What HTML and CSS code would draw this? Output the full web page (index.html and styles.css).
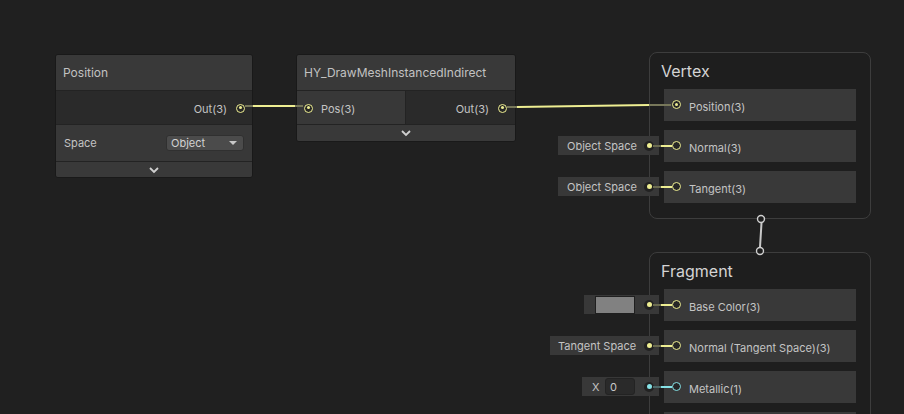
FILE: index.html
```html
<!DOCTYPE html>
<html>
<head>
<meta charset="utf-8">
<link rel="stylesheet" href="styles.css">
</head>
<body>
<div class="canvas">

  <div class="node node-position">
    <div class="node-title">Position</div>
    <div class="node-ports">
      <div class="port-out"><span class="label">Out(3)</span><span class="port connected"></span></div>
    </div>
    <div class="node-controls">
      <span class="label">Space</span>
      <div class="dropdown"><span>Object</span><span class="caret"></span></div>
    </div>
    <div class="node-collapse"><svg width="12" height="8" viewBox="0 0 12 8"><path d="M2 2 L6 6 L10 2" fill="none" stroke="#d0d0d0" stroke-width="1.8"/></svg></div>
  </div>

  <div class="node node-hy">
    <div class="node-title">HY_DrawMeshInstancedIndirect</div>
    <div class="node-ports split">
      <div class="port-in"><span class="port connected"></span><span class="label">Pos(3)</span></div>
      <div class="port-out"><span class="label">Out(3)</span><span class="port connected"></span></div>
    </div>
    <div class="node-collapse"><svg width="12" height="8" viewBox="0 0 12 8"><path d="M2 2 L6 6 L10 2" fill="none" stroke="#d0d0d0" stroke-width="1.8"/></svg></div>
  </div>

  <div class="context context-vertex">
    <div class="context-title">Vertex</div>
    <div class="block-list">
      <div class="block-row"><span class="port connected"></span><span class="label">Position(3)</span></div>
      <div class="block-row"><span class="port"></span><span class="label">Normal(3)</span></div>
      <div class="block-row"><span class="port"></span><span class="label">Tangent(3)</span></div>
    </div>
  </div>

  <div class="context context-fragment">
    <div class="context-title">Fragment</div>
    <div class="block-list">
      <div class="block-row"><span class="port"></span><span class="label">Base Color(3)</span></div>
      <div class="block-row"><span class="port"></span><span class="label">Normal (Tangent Space)(3)</span></div>
      <div class="block-row"><span class="port cyan"></span><span class="label">Metallic(1)</span></div>
      <div class="block-row"></div>
    </div>
  </div>

  <div class="inline-prop prop-normal"><span class="label">Object Space</span><span class="mini-port"></span></div>
  <div class="inline-prop prop-tangent"><span class="label">Object Space</span><span class="mini-port"></span></div>
  <div class="inline-prop prop-color"><span class="swatch"></span><span class="mini-port"></span></div>
  <div class="inline-prop prop-tspace"><span class="label">Tangent Space</span><span class="mini-port"></span></div>
  <div class="inline-prop prop-metal"><span class="label x">X</span><span class="num-field">0</span><span class="mini-port cyan"></span></div>

  <svg class="edges" width="904" height="414" viewBox="0 0 904 414">
    <g stroke-width="2" fill="none">
      <line x1="245" y1="106" x2="253" y2="106" stroke="#77775a"/>
      <line x1="253" y1="106" x2="295" y2="106" stroke="#eeee92"/>
      <line x1="295" y1="106" x2="303" y2="106" stroke="#77775a"/>

      <line x1="507" y1="107" x2="517" y2="107" stroke="#77775a"/>
      <line x1="517" y1="107" x2="649" y2="105" stroke="#eeee92"/>
      <line x1="649" y1="105" x2="671" y2="105" stroke="#77775a"/>

      <line x1="653" y1="146" x2="661" y2="146" stroke="#6b6b50"/>
      <line x1="661" y1="146" x2="672" y2="146" stroke="#eeee92"/>
      <line x1="653" y1="187" x2="661" y2="187" stroke="#6b6b50"/>
      <line x1="661" y1="187" x2="672" y2="187" stroke="#eeee92"/>
      <line x1="653" y1="305" x2="661" y2="305" stroke="#6b6b50"/>
      <line x1="661" y1="305" x2="672" y2="305" stroke="#eeee92"/>
      <line x1="653" y1="346" x2="661" y2="346" stroke="#6b6b50"/>
      <line x1="661" y1="346" x2="672" y2="346" stroke="#eeee92"/>
      <line x1="653" y1="387" x2="661" y2="387" stroke="#4e6b6b"/>
      <line x1="661" y1="387" x2="672" y2="387" stroke="#86e2e6"/>

      <line x1="761.5" y1="223" x2="760" y2="247" stroke="#c8c8c8"/>
    </g>
    <circle cx="761" cy="219" r="3.5" fill="#1e1e1e" stroke="#cfcfcf" stroke-width="1.4"/>
    <circle cx="760" cy="251" r="3.5" fill="#1e1e1e" stroke="#cfcfcf" stroke-width="1.4"/>
  </svg>
</div>
</body>
</html>
```

FILE: styles.css
```css
* { box-sizing: border-box; }
html, body { margin: 0; padding: 0; }
body {
  background: #202020;
  font-family: Inter, "Noto Sans", sans-serif;
  color: #c4c4c4;
}
.canvas {
  position: relative;
  width: 904px;
  height: 414px;
  overflow: hidden;
  background: #202020;
}
.label { font-size: 11px; color: #c4c4c4; white-space: nowrap; }

/* ---- graph nodes ---- */
.node {
  position: absolute;
  display: flex;
  flex-direction: column;
  background: #2a2a2a;
  border: 1px solid #191919;
  border-radius: 3px;
  overflow: hidden;
}
.node-position { left: 55px; top: 54px; width: 198px; height: 124px; }
.node-hy { left: 296px; top: 54px; width: 220px; height: 88px; }

.node-title {
  height: 35px;
  flex: none;
  display: flex;
  align-items: center;
  padding-left: 7px;
  background: #393939;
  font-size: 12px;
  color: #c2c2c2;
  white-space: nowrap;
}
.node-ports {
  height: 34px;
  flex: none;
  display: flex;
  background: #2a2a2a;
  border-top: 1px solid #232323;
}
.node-ports .port-out {
  flex: 1;
  display: flex;
  justify-content: flex-end;
  align-items: center;
  gap: 9px;
  padding-right: 7px;
  padding-top: 1px;
}
.node-ports .label { padding-top: 2px; }
.node-ports.split .port-in {
  width: 109px;
  flex: none;
  display: flex;
  align-items: center;
  gap: 8px;
  padding-left: 7px;
  padding-top: 1px;
  background: #383838;
  border-right: 1px solid #232323;
}
.node-ports.split .port-out { padding-right: 8px; }

.node-controls {
  height: 37px;
  flex: none;
  display: flex;
  align-items: center;
  justify-content: space-between;
  padding: 0 8px 1px 8px;
  background: #383838;
  border-top: 1px solid #232323;
}
.dropdown {
  width: 78px;
  height: 16px;
  display: flex;
  align-items: center;
  justify-content: space-between;
  padding: 0 6px 0 4px;
  background: #4b4b4b;
  border: 1px solid #303030;
  border-radius: 3px;
  font-size: 11px;
  color: #d2d2d2;
}
.caret {
  width: 0; height: 0;
  border-left: 4px solid transparent;
  border-right: 4px solid transparent;
  border-top: 4px solid #c8c8c8;
}
.node-collapse {
  flex: 1;
  display: flex;
  align-items: center;
  justify-content: center;
  background: #393939;
  border-top: 1px solid #232323;
}

/* ---- ports ---- */
.port {
  width: 9px;
  height: 9px;
  flex: none;
  border-radius: 50%;
  border: 1.5px solid #eeee92;
  background: #262626;
  position: relative;
}
.port.connected::after {
  content: "";
  position: absolute;
  left: 1.5px; top: 1.5px;
  width: 3px; height: 3px;
  border-radius: 50%;
  background: #eeee92;
}
.port.cyan { border-color: #86e2e6; }

/* ---- master stack contexts ---- */
.context {
  position: absolute;
  left: 649px;
  width: 222px;
  background: #1e1e1e;
  border: 1px solid #3d3d3d;
  border-radius: 8px;
}
.context-vertex { top: 52px; height: 167px; }
.context-fragment { top: 252px; height: 220px; }
.context-title {
  height: 36px;
  display: flex;
  align-items: center;
  padding-left: 11px;
  font-size: 16px;
  color: #d4d4d4;
}
.block-list {
  display: flex;
  flex-direction: column;
  gap: 9px;
  padding-left: 14px;
}
.block-row {
  width: 192px;
  height: 32px;
  display: flex;
  align-items: center;
  gap: 8px;
  padding-left: 8px;
  padding-top: 1px;
  background: #393939;
}
.block-row .port { top: -1px; }
.block-row .label { padding-top: 3px; }

/* ---- inline property fields beside block ports ---- */
.inline-prop {
  position: absolute;
  height: 19px;
  display: flex;
  align-items: center;
  background: #383838;
  padding-right: 5px;
}
.inline-prop .label { flex: 1; padding-left: 9px; }
.prop-normal { left: 558px; top: 136px; width: 101px; }
.prop-tangent { left: 558px; top: 177px; width: 101px; }
.prop-color { left: 584px; top: 295px; width: 75px; }
.prop-tspace { left: 550px; top: 336px; width: 109px; }
.prop-tspace .label { padding-left: 8px; }
.prop-metal { left: 582px; top: 377px; width: 77px; }
.prop-metal .label.x { flex: none; padding-left: 10px; width: 23px; }
.num-field {
  width: 30px;
  height: 17px;
  margin-right: 9px;
  display: flex;
  align-items: center;
  padding-left: 4px;
  background: #2a2a2a;
  border: 1px solid #232323;
  border-radius: 3px;
  font-size: 11px;
  color: #c8c8c8;
}
.swatch {
  width: 42px;
  height: 18px;
  margin-left: 11px;
  margin-right: 9px;
  background: #818181;
  border: 1px solid #1f1f1f;
}
.mini-port {
  width: 10px;
  height: 10px;
  flex: none;
  border-radius: 50%;
  background: #222222;
  position: relative;
}
.mini-port::after {
  content: "";
  position: absolute;
  left: 2.5px; top: 2.5px;
  width: 5px; height: 5px;
  border-radius: 50%;
  background: #eeee92;
}
.mini-port.cyan::after { background: #86e2e6; }

.edges {
  position: absolute;
  left: 0; top: 0;
  pointer-events: none;
}
```
